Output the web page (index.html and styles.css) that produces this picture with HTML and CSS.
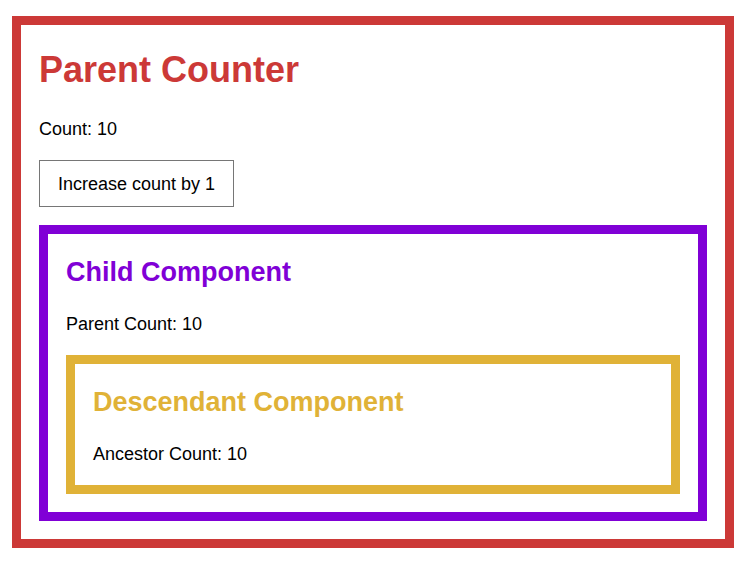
FILE: index.html
```html
<!DOCTYPE html>
<html lang="en">
<head>
<meta charset="utf-8">
<title>Parent Counter</title>
<link rel="stylesheet" href="styles.css">
</head>
<body>
  <div class="box box-parent">
    <h1 class="title title-parent">Parent Counter</h1>
    <p class="line">Count: 10</p>
    <button class="btn" type="button">Increase count by 1</button>
    <div class="box box-child">
      <h2 class="title title-child">Child Component</h2>
      <p class="line">Parent Count: 10</p>
      <div class="box box-desc">
        <h2 class="title title-desc">Descendant Component</h2>
        <p class="line">Ancestor Count: 10</p>
      </div>
    </div>
  </div>
</body>
</html>
```

FILE: styles.css
```css
html, body {
  background: #ffffff;
}
body {
  margin: 16px 13px 0 12px;
  font-family: "Liberation Sans", Arial, Helvetica, sans-serif;
  font-size: 18px;
  color: #000000;
}
.box {
  border: 9px solid;
  padding: 0 18px 18px;
}
.box-parent { border-color: #cc3937; }
.box-child { border-color: #8000d6; }
.box-desc { border-color: #e0b237; padding-bottom: 0; }

.title {
  font-weight: bold;
}
h1.title {
  font-size: 36px;
  line-height: 41px;
  margin: 24px 0 29px;
}
h2.title {
  font-size: 27px;
  line-height: 31px;
  margin: 23px 0 26px;
}
.title-parent { color: #cc3937; }
.title-child { color: #8000d6; }
.title-desc { color: #e0b237; }

.line {
  font-size: 18px;
  line-height: 21px;
  margin: 0 0 20px;
}
.btn {
  display: block;
  font-family: "Liberation Sans", Arial, Helvetica, sans-serif;
  font-size: 18px;
  line-height: 21px;
  color: #000000;
  background: #ffffff;
  border: 1px solid #767676;
  border-radius: 0;
  padding: 13px 18px 11px;
  margin: 0 0 18px;
}
```
